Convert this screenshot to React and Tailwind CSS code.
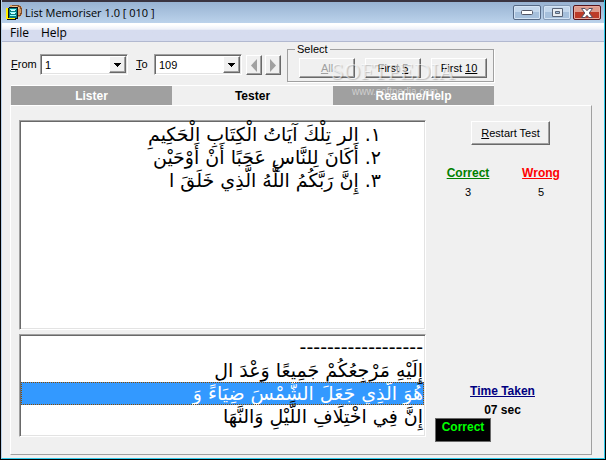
import React, { useState } from 'react';
import clsx from 'clsx';

const TABS = [
  { id: 'lister', label: 'Lister' },
  { id: 'tester', label: 'Tester' },
  { id: 'readme', label: 'Readme/Help' },
];

const ANSWERS = [
  '١. الر تِلْكَ آيَاتُ الْكِتَابِ الْحَكِيمِ',
  '٢. أَكَانَ لِلنَّاسِ عَجَبًا أَنْ أَوْحَيْن',
  '٣. إِنَّ رَبَّكُمُ اللَّهُ الَّذِي خَلَقَ ا',
];

const CHOICES = [
  '------------------',
  'إِلَيْهِ مَرْجِعُكُمْ جَمِيعًا وَعْدَ ال',
  'هُوَ الَّذِي جَعَلَ الشَّمْسَ ضِيَاءً وَ',
  'إِنَّ فِي اخْتِلَافِ اللَّيْلِ وَالنَّهَا',
];

const RAISED = 'border border-t-white border-l-white border-r-[#696969] border-b-[#696969] shadow-[inset_-1px_-1px_0_#a0a0a0] bg-[#f0f0f0]';
const SUNKEN = 'border border-t-[#a0a0a0] border-l-[#a0a0a0] border-r-white border-b-white shadow-[inset_1px_1px_0_#696969,inset_-1px_-1px_0_#e3e3e3] bg-white';
const ARABIC = "font-['DejaVu_Sans','Noto_Sans',sans-serif] text-[19px] leading-[23px]";

function AppIcon() {
  return (
    <svg width="17" height="17" viewBox="0 0 17 17" shapeRendering="crispEdges" aria-hidden="true">
      <path d="M4 1h9l3 3v6l-3 3H8z" fill="#d79a62" />
      <path d="M6 1h6v1h2v2h1v5h-1v2h-2" fill="none" stroke="#7d4d2b" />
      <path d="M6 2h5v1h2v2H6z" fill="#f0c391" />
      <path d="M1 4h2V3h9v12h-2v1H1z" fill="#111" />
      <path d="M0 4h2v11H0zM1 14h8v1H1z" fill="#ffee00" />
      <path d="M3 4h8v10H3z" fill="#087f84" />
      <path d="M4 5h6v1H4zM4 8h6v1H4zM4 11h6v1H4z" fill="#8fffff" />
      <path d="M5 6h4v1H5zM5 9h4v1H5z" fill="#d8ffff" />
    </svg>
  );
}

function CaptionButton({ label, close, faded, children }) {
  return (
    <button
      aria-label={label}
      className={clsx(
        'flex h-[15px] w-7 items-center justify-center rounded-[2px] border',
        close
          ? 'border-[#57141a] bg-linear-to-b from-[#dc9b8d] from-50% to-[#bc3b29] to-50% shadow-[inset_0_0_0_1px_#e8a89c]'
          : 'bg-linear-to-b from-[#c3d7ec] from-50% to-[#a6c0dc] to-50% shadow-[inset_0_0_0_1px_#d3e3f4]',
        !close && (faded ? 'border-[#8399b5]' : 'border-[#566a86]')
      )}
    >
      {children}
    </button>
  );
}

function Combo({ id, value, options }) {
  return (
    <div className={clsx('relative h-[21px] w-22 p-[2px]', SUNKEN)}>
      <select id={id} defaultValue={value} className="block h-full w-full appearance-none bg-transparent pl-[2px] text-[11px] leading-4 outline-none">
        {options.map((o) => <option key={o}>{o}</option>)}
      </select>
      <span className={clsx('pointer-events-none absolute top-px right-px bottom-px flex w-[17px] items-center justify-center', RAISED)}>
        <svg width="7" height="4" viewBox="0 0 7 4" shapeRendering="crispEdges"><path d="M0 0h7v1H6v1H5v1H4v1H3V3H2V2H1V1H0z" /></svg>
      </span>
    </div>
  );
}

function StepButton({ label, d }) {
  return (
    <button aria-label={label} className={clsx('flex h-5 w-4 items-center justify-center', RAISED)}>
      <svg width="8" height="13" viewBox="0 0 8 13"><path d={d} fill="#a0a0a0" /></svg>
    </button>
  );
}

function App() {
  const [tab, setTab] = useState('tester');
  const [selected, setSelected] = useState(2);

  return (
    <div className="flex min-h-screen flex-col border-r border-b border-l border-black bg-[#f0f0f0] font-['Liberation_Sans',Arial,sans-serif] text-[11px] leading-4 text-black">
      <div className="flex flex-1 flex-col border-r border-b border-l border-r-[#30c8e8] border-b-[#30c8e8] border-l-[#b9d1ea]">
        <header className="flex h-[23px] items-center gap-[2px] border-t-2 border-[#3a3440] bg-linear-to-b from-[#98b3d2] to-[#bbd2eb] pr-[3px] pl-1">
          <AppIcon />
          <h1 className="flex-1 font-['Open_Sans',sans-serif] text-[11px] leading-5">List Memoriser 1.0 [ 010 ]</h1>
          <div className="flex gap-[2px]">
            <CaptionButton label="Minimize">
              <svg width="12" height="5" viewBox="0 0 12 5"><rect x=".5" y=".5" width="11" height="4" rx="1" fill="#fff" stroke="#535666" /></svg>
            </CaptionButton>
            <CaptionButton label="Maximize" faded>
              <svg width="11" height="9" viewBox="0 0 11 9"><path d="M.5.5h10v8H.5z" fill="#e8edf2" stroke="#596477" /><path d="M3.5 3.5h4v2h-4z" fill="#a0bddb" stroke="#596477" /></svg>
            </CaptionButton>
            <CaptionButton label="Close" close>
              <svg width="12" height="10" viewBox="0 0 12 10"><path d="M.5.5h3.6L6 2.7 7.900.5h3.600L8.200 5l3.300 4.500H7.900L6 7.300 4.100 9.500H.5L3.800 5z" fill="#fff" stroke="#555063" /></svg>
            </CaptionButton>
          </div>
        </header>

        <nav className="flex h-[19px] items-center gap-3 border-b border-[#b2b9d0] bg-linear-to-b from-white from-10% via-[#eef1f9] via-35% to-[#d6dcef] to-40% px-2 pt-[2px] font-['Open_Sans',sans-serif] text-[12px] leading-4">
          <button>File</button>
          <button>Help</button>
        </nav>

        <div className="flex h-[43px] items-start pl-[9px]">
          <label htmlFor="from" className="mt-[14px] w-[29px]"><u>F</u>rom</label>
          <div className="mt-3"><Combo id="from" value="1" options={['1', '2', '3']} /></div>
          <label htmlFor="to" className="mt-[14px] ml-2 w-[18px]"><u>T</u>o</label>
          <div className="mt-3"><Combo id="to" value="109" options={['107', '108', '109']} /></div>
          <div className="mt-[13px] ml-1 flex gap-[3px]">
            <StepButton label="Previous" d="M7 0v13L1 6.500z" />
            <StepButton label="Next" d="M1 0v13l6-6.500z" />
          </div>
          <fieldset className="relative ml-[6px] h-10 w-[207px] border border-[#a0a0a0] pr-[5px] pl-[11px] shadow-[1px_1px_0_#fff]">
            <legend className="-ml-1 px-[2px] leading-[14px]">Select</legend>
            <div className="mt-[2px] flex gap-[10px]">
              <button disabled className={clsx('h-5 w-14 text-[#a0a0a0]', RAISED)}><u>A</u>ll</button>
              <button className={clsx('h-5 w-14', RAISED)}>First <u>5</u></button>
              <button className={clsx('h-5 w-14', RAISED)}>First <u>10</u></button>
            </div>
            <span aria-hidden="true" className="pointer-events-none absolute top-1 left-[43px] font-['Liberation_Serif',serif] text-[23px] leading-6 text-white/60 [text-shadow:1px_1px_1px_#0003]">SOFTPEDIA</span>
          </fieldset>
        </div>

        <div role="tablist" className="relative ml-[9px] flex">
          {TABS.map((t) => (
            <button
              key={t.id}
              role="tab"
              aria-selected={tab === t.id}
              onClick={() => setTab(t.id)}
              className={clsx(
                'h-5 w-[161px] border-t border-white text-[12px] leading-4 font-bold',
                tab === t.id ? 'bg-[#f0f0f0] text-black' : 'bg-[#a0a0a0] text-white'
              )}
            >
              {t.label}
            </button>
          ))}
          <span aria-hidden="true" className="pointer-events-none absolute top-[1px] left-[341px] text-[10px] leading-3 text-white/50">www.softpedia.com</span>
        </div>

        <main className="mr-3 mb-[3px] ml-2 flex flex-1 border border-t-white border-r-[#a0a0a0] border-b-[#a0a0a0] border-l-white pt-[14px] pb-[17px] pl-2">
          <div className="flex flex-1 flex-col gap-1">
            <ul dir="rtl" className={clsx('flex-1 py-[2px] pr-[44px]', SUNKEN, ARABIC)}>
              {ANSWERS.map((line) => <li key={line}>{line}</li>)}
            </ul>
            <ul dir="rtl" role="listbox" aria-label="Choices" className={clsx('h-[103px] p-px', SUNKEN, ARABIC)}>
              {CHOICES.map((line, i) => (
                <li
                  key={line}
                  role="option"
                  aria-selected={selected === i}
                  onClick={() => setSelected(i)}
                  className={clsx('h-[23px] pr-px', selected === i && 'bg-[#3399ff] text-white outline-1 outline-dotted -outline-offset-1 outline-[#8a4a00]')}
                >
                  {line}
                </li>
              ))}
            </ul>
          </div>

          <aside className="flex w-[165px] flex-col items-center pr-[12px]">
            <button className={clsx('mt-px ml-4 h-6 w-[79px]', RAISED)}><u>R</u>estart Test</button>
            <dl className="mt-5 ml-1 grid grid-cols-2 gap-x-[1px] text-center">
              <div className="w-[72px]">
                <dt className="text-[12px] font-bold text-[#008000] underline">Correct</dt>
                <dd className="mt-[3px]">3</dd>
              </div>
              <div className="w-[72px]">
                <dt className="text-[12px] font-bold text-[#ff0000] underline">Wrong</dt>
                <dd className="mt-[3px]">5</dd>
              </div>
            </dl>
            <div className="mt-auto text-center text-[12px] font-bold">
              <h2 className="text-[#000080] underline">Time Taken</h2>
              <p className="mt-[3px]">07 sec</p>
            </div>
            <output className="-mb-[5px] ml-[9px] h-6 w-14 self-start border border-[#696969] bg-black text-center text-[12px] font-bold text-[#00ff00]">Correct</output>
          </aside>
        </main>
      </div>
    </div>
  );
}

export default App;
